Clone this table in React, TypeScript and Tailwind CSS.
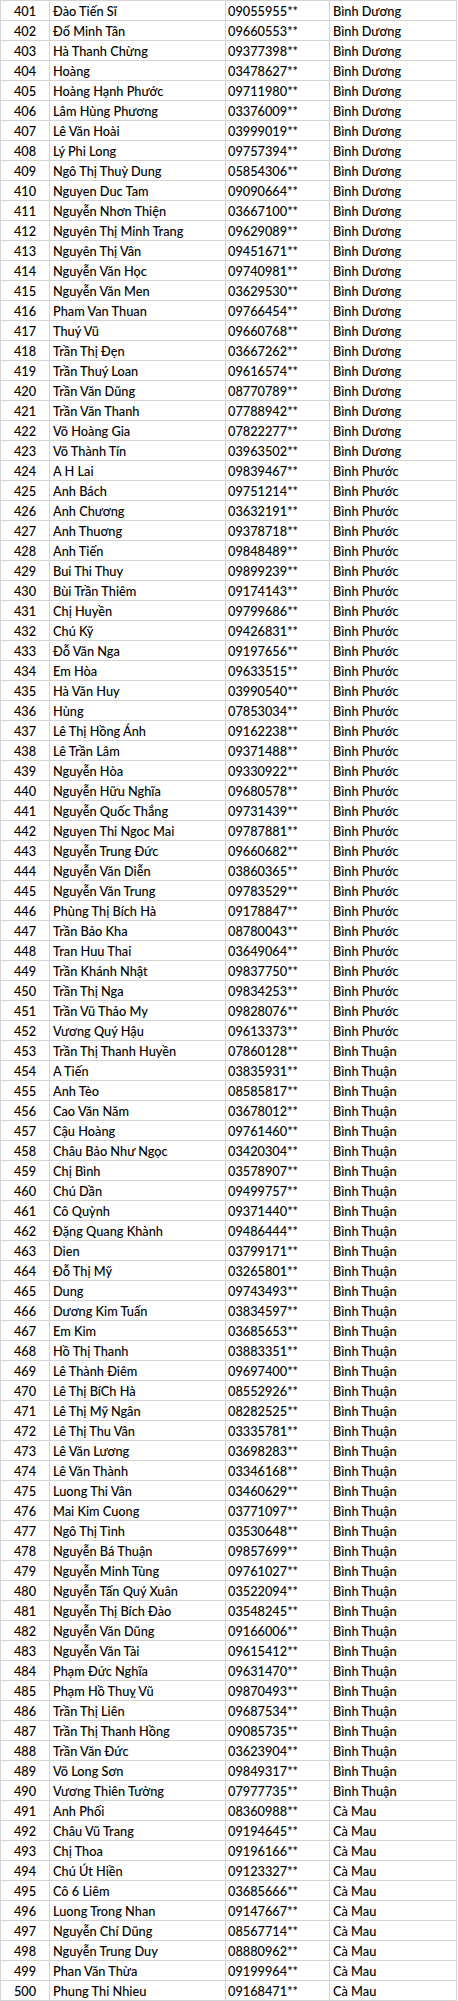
import * as React from "react";

// raw rows: name|phone prefix (phones are masked with ** at the end)
const RAW = `Đào Tiến Sĩ|09055955
Đổ Minh Tân|09660553
Hà Thanh Chừng|09377398
Hoàng|03478627
Hoàng Hạnh Phước|09711980
Lâm Hùng Phương|03376009
Lê Văn Hoài|03999019
Lý Phi Long|09757394
Ngô Thị Thuỳ Dung|05854306
Nguyen Duc Tam|09090664
Nguyễn Nhơn Thiện|03667100
Nguyên Thị Minh Trang|09629089
Nguyên Thị Vân|09451671
Nguyễn Văn Học|09740981
Nguyễn Văn Men|03629530
Pham Van Thuan|09766454
Thuý Vũ|09660768
Trần Thị Đẹn|03667262
Trần Thuý Loan|09616574
Trần Văn Dũng|08770789
Trần Văn Thanh|07788942
Võ Hoàng Gia|07822277
Võ Thành Tín|03963502
A H Lai|09839467
Anh Bách|09751214
Anh Chương|03632191
Anh Thuơng|09378718
Anh Tiến|09848489
Bui Thi Thuy|09899239
Bùi Trần Thiêm|09174143
Chị Huyền|09799686
Chú Kỹ|09426831
Đỗ Văn Nga|09197656
Em Hòa|09633515
Hà Văn Huy|03990540
Hùng|07853034
Lê Thị Hồng Ánh|09162238
Lê Trần Lâm|09371488
Nguyễn Hòa|09330922
Nguyễn Hữu Nghĩa|09680578
Nguyễn Quốc Thắng|09731439
Nguyen Thi Ngoc Mai|09787881
Nguyễn Trung Đức|09660682
Nguyễn Văn Diễn|03860365
Nguyễn Văn Trung|09783529
Phùng Thị Bích Hà|09178847
Trần Bảo Kha|08780043
Tran Huu Thai|03649064
Trần Khánh Nhật|09837750
Trần Thị Nga|09834253
Trần Vũ Thảo My|09828076
Vương Quý Hậu|09613373
Trần Thị Thanh Huyền|07860128
A Tiến|03835931
Anh Tèo|08585817
Cao Văn Năm|03678012
Cậu Hoàng|09761460
Châu Bảo Như Ngọc|03420304
Chị Bình|03578907
Chú Dần|09499757
Cô Quỳnh|09371440
Đặng Quang Khành|09486444
Dien|03799171
Đỗ Thị Mỹ|03265801
Dung|09743493
Dương Kim Tuấn|03834597
Em Kim|03685653
Hồ Thị Thanh|03883351
Lê Thành Điêm|09697400
Lê Thị BíCh Hà|08552926
Lê Thị Mỹ Ngân|08282525
Lê Thị Thu Vân|03335781
Lê Văn Lương|03698283
Lê Văn Thành|03346168
Luong Thi Vân|03460629
Mai Kim Cuong|03771097
Ngô Thị Tình|03530648
Nguyễn Bá Thuận|09857699
Nguyễn Minh Tùng|09761027
Nguyễn Tấn Quý Xuân|03522094
Nguyễn Thị Bích Đào|03548245
Nguyễn Văn Dũng|09166006
Nguyễn Văn Tài|09615412
Phạm Đức Nghĩa|09631470
Phạm Hồ Thuỵ Vũ|09870493
Trần Thị Liên|09687534
Trần Thị Thanh Hồng|09085735
Trần Văn Đức|03623904
Võ Long Sơn|09849317
Vương Thiên Tường|07977735
Anh Phối|08360988
Châu Vũ Trang|09194645
Chị Thoa|09196166
Chú Út Hiền|09123327
Cô 6 Liêm|03685666
Luong Trong Nhan|09147667
Nguyễn Chí Dũng|08567714
Nguyễn Trung Duy|08880962
Phan Văn Thừa|09199964
Phung Thi Nhieu|09168471`;

function provinceFor(no: number) {
  if (no <= 423) return "Bình Dương";
  if (no <= 452) return "Bình Phước";
  if (no <= 490) return "Bình Thuận";
  return "Cà Mau";
}

const ROWS = RAW.split("\n").map((line, i) => {
  const [name, phone] = line.split("|");
  const no = 401 + i;
  return { no, name, phone: phone + "**", province: provinceFor(no) };
});

const cell = "border-l border-[#d4d4d4] pt-[2px] leading-[17px] whitespace-nowrap overflow-hidden";

export default function App() {
  return (
    <div className="bg-white w-[458px] text-black text-[12.75px] font-medium" style={{ fontFamily: "Lato, 'Open Sans', sans-serif" }}>
      <div className="w-[457px] border-b border-[#d4d4d4]">
        {ROWS.map((r) => (
          <div key={r.no} className="flex h-[20px] border-t border-[#d4d4d4]">
            <div className={`${cell} w-[49px] text-center`}>{r.no}</div>
            <div className={`${cell} w-[176px] pl-[3px]`}>{r.name}</div>
            <div className={`${cell} w-[104px] pl-[2px]`}>{r.phone}</div>
            <div className={`${cell} w-[128px] pl-[3px] border-r`}>{r.province}</div>
          </div>
        ))}
      </div>
    </div>
  );
}
